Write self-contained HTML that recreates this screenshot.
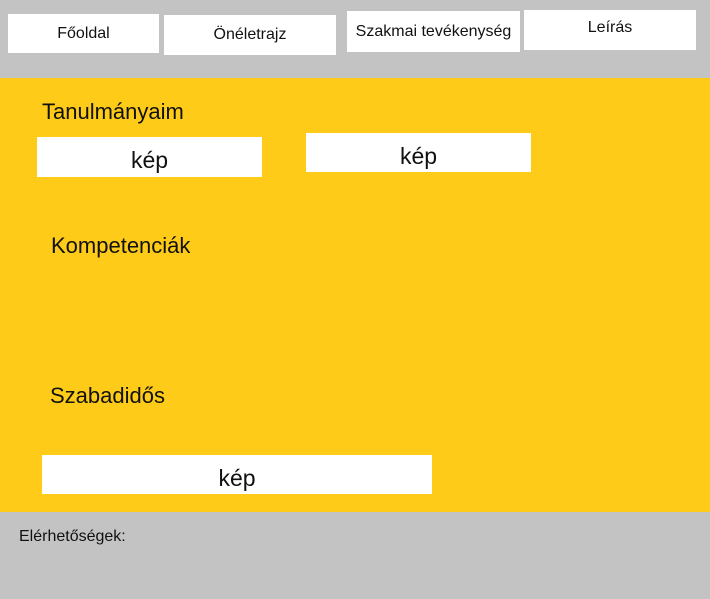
<!DOCTYPE html>
<html><head><meta charset="utf-8"><style>
body{margin:0;width:710px;height:599px;background:#c3c3c3;position:relative;overflow:hidden;font-family:"Liberation Sans",sans-serif;color:#111}
.b{position:absolute;background:#fff;display:flex;align-items:center;justify-content:center;font-size:16px}
.y{position:absolute;left:0;top:78px;width:710px;height:434px;background:#fecb19}
.t{position:absolute;font-size:22px}
.k{position:absolute;background:#fff;display:flex;align-items:center;justify-content:center;font-size:23px}
</style></head><body>
<div class="b" style="left:8px;top:14px;width:151px;height:39px">Főoldal</div>
<div class="b" style="left:164px;top:15px;width:172px;height:40px">Önéletrajz</div>
<div class="b" style="left:347px;top:11px;width:173px;height:41px">Szakmai tevékenység</div>
<div class="b" style="left:524px;top:10px;width:172px;height:40px;padding-bottom:4px;box-sizing:border-box">Leírás</div>
<div class="y"></div>
<div class="t" style="left:42px;top:99px">Tanulmányaim</div>
<div class="k" style="left:37px;top:137px;width:225px;height:40px;padding-top:7px;box-sizing:border-box">kép</div>
<div class="k" style="left:306px;top:133px;width:225px;height:39px;padding-top:7px;box-sizing:border-box">kép</div>
<div class="t" style="left:51px;top:233px">Kompetenciák</div>
<div class="t" style="left:50px;top:383px">Szabadidős</div>
<div class="k" style="left:42px;top:455px;width:390px;height:39px;padding-top:7px;box-sizing:border-box">kép</div>
<div style="position:absolute;left:19px;top:528px;font-size:16px">Elérhetőségek:</div>
</body></html>
